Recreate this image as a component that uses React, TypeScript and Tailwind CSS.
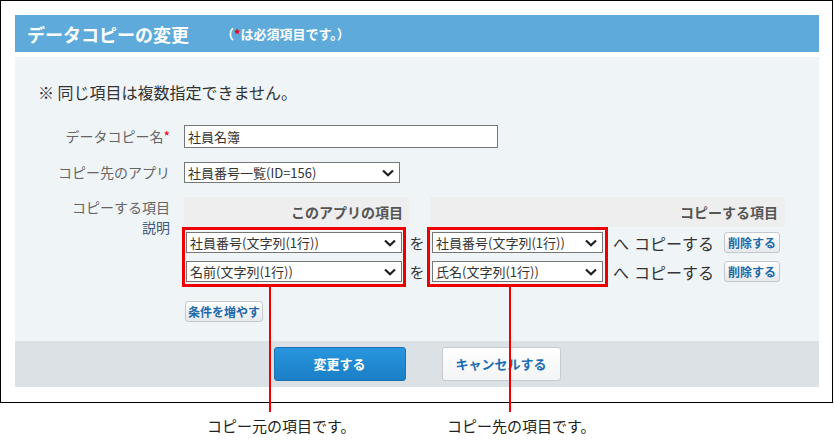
const font = "font-['Noto_Sans_CJK_JP','Noto_Sans',sans-serif]"

function Chevron() {
  return (
    <svg width="12" height="8" viewBox="0 0 12 8" className="shrink-0">
      <path d="M1 1.5 L6 6.3 L11 1.5" fill="none" stroke="#1f1f1f" strokeWidth="2.2" />
    </svg>
  )
}

function FakeSelect({ value, width }: { value: string; width: string }) {
  return (
    <div
      className={`${width} flex h-[21px] items-center justify-between border border-[#767676] bg-white pl-[3px] pr-[5px] text-[13px] leading-none text-[#333]`}
    >
      <span className="whitespace-nowrap">{value}</span>
      <Chevron />
    </div>
  )
}

function SmallButton({ children, width }: { children: string; width: string }) {
  return (
    <div
      className={`${width} flex h-[21px] items-center justify-center rounded-[3px] border border-[#c4c8cc] bg-gradient-to-b from-white to-[#e6e9ec] text-[12px] font-bold leading-none text-[#1d69ac]`}
    >
      {children}
    </div>
  )
}

const rows = [
  { from: '社員番号(文字列(1行))', to: '社員番号(文字列(1行))' },
  { from: '名前(文字列(1行))', to: '氏名(文字列(1行))' },
]

export default function App() {
  return (
    <div className={`relative h-[440px] w-[834px] bg-white ${font}`}>
      {/* screenshot frame */}
      <div className="h-[403px] w-[833px] border border-black px-[14px] pt-[14px]">
        <div className="flex h-[37px] w-[804px] items-center bg-[#5eabdb] pl-[12px] text-white">
          <span className="text-[18px] font-bold leading-none">データコピーの変更</span>
          <span className="ml-[32px] text-[13px] font-bold leading-none">
            （<span className="text-[#e60012]">*</span>は必須項目です。）
          </span>
        </div>

        <div className="mt-[5px] flex h-[330px] w-[804px] flex-col bg-[#eff4f7]">
          <div className="flex-1 pt-[25px]">
            <p className="pl-[23px] text-[16px] leading-[20px] text-[#333]">※ 同じ項目は複数指定できません。</p>

            <div className="mt-[23px] grid grid-cols-[155px_1fr] gap-x-[14px] gap-y-[14px] text-[14px]">
              <div className="text-right leading-[23px] text-[#666]">
                データコピー名<span className="text-[#e60012]">*</span>
              </div>
              <div className="h-[23px] w-[314px] border border-[#767676] bg-white px-[3px] text-[13px] leading-[21px] text-[#333]">
                社員名簿
              </div>

              <div className="text-right leading-[21px] text-[#666]">コピー先のアプリ</div>
              <FakeSelect value="社員番号一覧(ID=156)" width="w-[216px]" />

              <div className="flex flex-col items-end leading-[20px]">
                <div className="text-[#666]">コピーする項目</div>
                <div className="text-[#3d5b7d]">説明</div>
              </div>
              <div>
                <div className="flex h-[30px] text-[14px] font-bold text-[#555]">
                  <div className="flex w-[225px] items-center justify-end bg-[#eeeeee] pr-[6px]">このアプリの項目</div>
                  <div className="ml-[21px] flex w-[355px] items-center justify-end bg-[#eeeeee] pr-[7px]">コピーする項目</div>
                </div>
                <div className="mt-[5px] flex flex-col gap-[8px]">
                  {rows.map((r, i) => (
                    <div key={i} className="flex h-[21px] items-center pl-[2px]">
                      <FakeSelect value={r.from} width="w-[216px]" />
                      <span className="w-[30px] text-center text-[15px] leading-none text-[#333]">を</span>
                      <FakeSelect value={r.to} width="w-[171px]" />
                      <span className="ml-[10px] text-[16px] leading-none text-[#333]">へ</span>
                      <span className="ml-[5px] whitespace-nowrap text-[16px] leading-none text-[#333]">コピーする</span>
                      <div className="ml-[10px]">
                        <SmallButton width="w-[56px]">削除する</SmallButton>
                      </div>
                    </div>
                  ))}
                </div>
                <div className="mt-[19px] pl-[1px]">
                  <SmallButton width="w-[78px]">条件を増やす</SmallButton>
                </div>
              </div>
            </div>
          </div>

          <div className="flex h-[46px] items-center justify-center gap-[36px] bg-[#dce1e5]">
            <div className="flex h-[34px] w-[132px] items-center justify-center rounded-[3px] border border-[#1a72b4] bg-gradient-to-b from-[#2896de] to-[#1a7fc6] text-[13px] font-bold text-white">
              変更する
            </div>
            <div className="flex h-[34px] w-[119px] items-center justify-center rounded-[3px] border border-[#c6cbcf] bg-gradient-to-b from-white to-[#f3f4f5] text-[13px] font-bold text-[#1a6db5]">
              キャンセルする
            </div>
          </div>
        </div>
      </div>

      {/* annotations */}
      <div className="absolute left-[182px] top-[227px] h-[60px] w-[224px] border-[3px] border-[#ee0000]" />
      <div className="absolute left-[427px] top-[227px] h-[60px] w-[181px] border-[3px] border-[#ee0000]" />
      <div className="absolute left-[269px] top-[287px] h-[125px] w-[2px] bg-[#ee0000]" />
      <div className="absolute left-[509px] top-[287px] h-[125px] w-[2px] bg-[#ee0000]" />
      <div className="absolute left-[207px] top-[416px] text-[15px] leading-[20px] text-[#222]">コピー元の項目です。</div>
      <div className="absolute left-[447px] top-[416px] text-[15px] leading-[20px] text-[#222]">コピー先の項目です。</div>
    </div>
  )
}
